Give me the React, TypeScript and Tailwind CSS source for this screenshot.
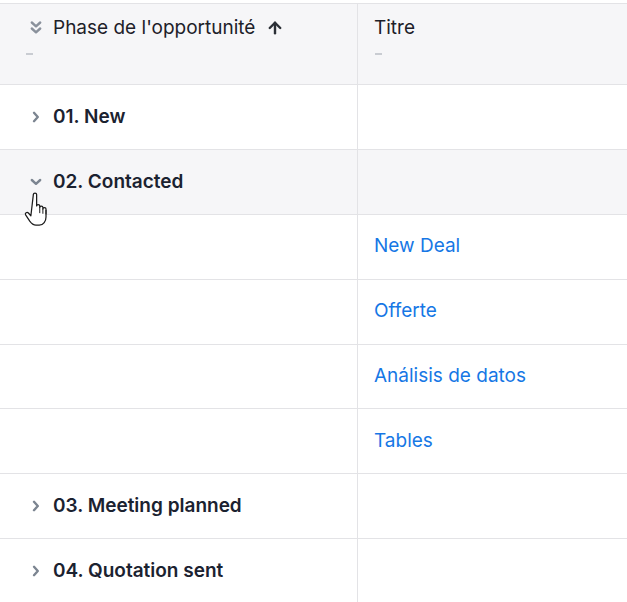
import { ArrowUp } from 'lucide-react';

const font = { fontFamily: 'Inter, "Noto Sans", sans-serif' };

type Row =
  | { kind: 'group'; label: string; open: boolean; active?: boolean }
  | { kind: 'item'; title: string };

const rows: Row[] = [
  { kind: 'group', label: '01. New', open: false },
  { kind: 'group', label: '02. Contacted', open: true, active: true },
  { kind: 'item', title: 'New Deal' },
  { kind: 'item', title: 'Offerte' },
  { kind: 'item', title: 'Análisis de datos' },
  { kind: 'item', title: 'Tables' },
  { kind: 'group', label: '03. Meeting planned', open: false },
  { kind: 'group', label: '04. Quotation sent', open: false },
];

function Chevron({ open }: { open: boolean }) {
  return (
    <svg width="14" height="14" viewBox="0 0 14 14" className="shrink-0">
      {open ? (
        <path d="M2.8 5l4.2 3.8L11.2 5" fill="none" stroke="#7c8591" strokeWidth="2.4" strokeLinecap="round" strokeLinejoin="round" />
      ) : (
        <path d="M5 2.8l3.8 4.2L5 11.2" fill="none" stroke="#7c8591" strokeWidth="2.4" strokeLinecap="round" strokeLinejoin="round" />
      )}
    </svg>
  );
}

function DoubleChevron() {
  return (
    <svg width="14" height="16" viewBox="0 0 14 16" className="shrink-0">
      <path d="M2.8 2.5l4.2 3.8 4.2-3.8M2.8 8.5l4.2 3.8 4.2-3.8" fill="none" stroke="#8a919c" strokeWidth="2.4" strokeLinecap="round" strokeLinejoin="round" />
    </svg>
  );
}

function HandCursor() {
  return (
    <svg width="34" height="40" viewBox="0 0 26 32" className="absolute left-[22px] top-[190px]">
      <path
        d="M8.5 3.5c0-1.4 2.6-1.4 2.6 0v9.2c0-1.3 2.5-1.3 2.5 0v1.2c0-1.3 2.5-1.3 2.5 0v1.2c0-1.3 2.5-1.3 2.5 0v6.4c0 3.4-2 6.6-5.4 6.6h-2.6c-2.4 0-3.6-1.2-5-3.2l-3.3-5c-0.8-1.3 1.1-2.7 2.2-1.5l2 2.2z"
        fill="#fff"
        stroke="#1c1c1c"
        strokeWidth="1"
        strokeLinejoin="round"
      />
      <path d="M13.6 14v4.5M16.1 15v4M18.6 16v3.5" stroke="#1c1c1c" strokeWidth="0.8" />
    </svg>
  );
}

export default function App() {
  return (
    <div className="relative w-[627px] h-[602px] overflow-hidden bg-white pt-[3px]" style={font}>
      <div className="border-t border-[#e3e3e6]">
        {/* Header */}
        <div className="flex h-[81px] bg-[#f6f6f8] border-b border-[#e3e3e6]">
          <div className="w-[358px] border-r border-[#e3e3e6] pl-[29px] pt-[12px]">
            <div className="flex items-center h-[24px]">
              <DoubleChevron />
              <span className="ml-[10px] text-[19px] text-[#1d2129]">Phase de l'opportunité</span>
              <ArrowUp className="ml-[11px] w-[18px] h-[18px] text-[#2b2f36]" strokeWidth={3.2} />
            </div>
            <div className="mt-[13px] ml-[-3px] w-[7px] h-[2px] bg-[#c9ccd2]" />
          </div>
          <div className="flex-1 pl-[16px] pt-[12px]">
            <div className="h-[24px] flex items-center text-[19px] text-[#1d2129]">Titre</div>
            <div className="mt-[13px] ml-[1px] w-[7px] h-[2px] bg-[#c9ccd2]" />
          </div>
        </div>

        {rows.map((r, i) => (
          <div
            key={i}
            className={`flex h-[64.9px] border-b border-[#e3e3e6] ${
              r.kind === 'group' && r.active ? 'bg-[#f6f6f8]' : 'bg-white'
            }`}
          >
            <div className="w-[358px] border-r border-[#e3e3e6] flex items-center pl-[29px]">
              {r.kind === 'group' && (
                <>
                  <Chevron open={r.open} />
                  <span className="ml-[10px] text-[19px] font-semibold text-[#1b2230]">{r.label}</span>
                </>
              )}
            </div>
            <div className="flex-1 flex items-center pl-[16px]">
              {r.kind === 'item' && <span className="text-[19px] text-[#1677e5]">{r.title}</span>}
            </div>
          </div>
        ))}
      </div>
      <HandCursor />
    </div>
  );
}
